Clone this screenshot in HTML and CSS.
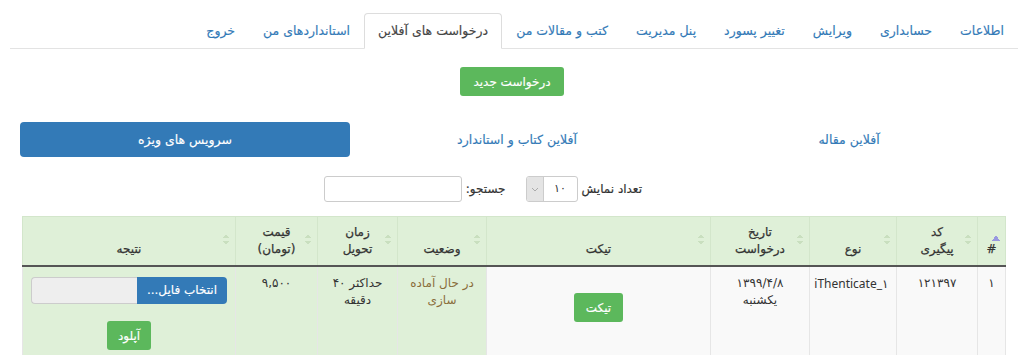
FILE: index.html
```html
<!DOCTYPE html>
<html lang="fa" dir="rtl">
<head>
  <meta charset="UTF-8" />
  <meta name="viewport" content="width=device-width, initial-scale=1.0" />
  <title>درخواست های آفلاین</title>
  <link rel="stylesheet" href="styles.css">
</head>
<body>
  <ul class="tabs">
    <li><a href="#">اطلاعات</a></li>
    <li><a href="#">حسابداری</a></li>
    <li><a href="#">ویرایش</a></li>
    <li><a href="#">تغییر پسورد</a></li>
    <li><a href="#">پنل مدیریت</a></li>
    <li><a href="#">کتب و مقالات من</a></li>
    <li class="active"><a href="#">درخواست های آفلاین</a></li>
    <li><a href="#">استانداردهای من</a></li>
    <li><a href="#">خروج</a></li>
  </ul>

  <div class="new-request">
    <button class="btn btn-green">درخواست جدید</button>
  </div>

  <ul class="pills">
    <li><a href="#">آفلاین مقاله</a></li>
    <li><a href="#">آفلاین کتاب و استاندارد</a></li>
    <li class="active"><a href="#">سرویس های ویژه</a></li>
  </ul>

  <div class="controls">
    <label class="length">تعداد نمایش
      <span class="select">
        <span class="select-value">۱۰</span>
        <span class="select-arrow">
          <svg width="8" height="5" viewBox="0 0 8 5"><path d="M1 1l3 3 3-3" fill="none" stroke="#aaa" stroke-width="1"/></svg>
        </span>
      </span>
    </label>
    <label class="search">جستجو:<input type="text"></label>
  </div>

  <table class="grid">
    <colgroup>
      <col style="width:28px">
      <col style="width:81px">
      <col style="width:87px">
      <col style="width:99px">
      <col style="width:224px">
      <col style="width:89px">
      <col style="width:80px">
      <col style="width:82px">
      <col style="width:213px">
    </colgroup>
    <thead>
      <tr>
        <th class="sorted">#</th>
        <th>کد<br>پیگیری</th>
        <th>نوع</th>
        <th>تاریخ<br>درخواست</th>
        <th>تیکت</th>
        <th>وضعیت</th>
        <th>زمان<br>تحویل</th>
        <th>قیمت<br>(تومان)</th>
        <th>نتیجه</th>
      </tr>
    </thead>
    <tbody>
      <tr>
        <td>۱</td>
        <td>۱۲۱۳۹۷</td>
        <td><bdi class="latin">iThenticate_۱</bdi></td>
        <td>۱۳۹۹/۴/۸<br>یکشنبه</td>
        <td><button class="btn btn-green btn-ticket">تیکت</button></td>
        <td class="ok status">در حال آماده<br>سازی</td>
        <td class="ok">حداکثر ۴۰<br>دقیقه</td>
        <td class="ok">۹,۵۰۰</td>
        <td class="ok">
          <div class="file-group">
            <span class="file-btn">انتخاب فایل...</span>
            <span class="file-name"></span>
          </div>
          <button class="btn btn-green btn-upload">آپلود</button>
        </td>
      </tr>
    </tbody>
  </table>
</body>
</html>
```

FILE: styles.css
```css
body {
  margin: 0;
  font-family: "DejaVu Sans", "Noto Sans", sans-serif;
  font-size: 12px;
  color: #333;
  background-color: #ffffff;
}
a {
  text-decoration: none;
  color: #337ab7;
}
.tabs {
  list-style: none;
  display: flex;
  margin: 13px 6px 0 10px;
  padding: 0;
  border-bottom: 1px solid #e3e3e3;
}
.tabs li {
  margin-bottom: -1px;
}
.tabs a {
  display: block;
  padding: 7px 13px;
  line-height: 20px;
  font-size: 12.5px;
  border: 1px solid transparent;
  border-radius: 4px 4px 0 0;
  -webkit-text-stroke: 0.15px;
}
.tabs .active a {
  color: #444;
  background-color: #fff;
  border-color: #ddd #ddd transparent;
}
.new-request {
  display: flex;
  justify-content: center;
  margin-top: 18px;
}
.btn {
  font-family: inherit;
  font-size: 12px;
  border: none;
  border-radius: 3px;
  color: white;
  cursor: pointer;
  -webkit-text-stroke: 0.15px;
}
.btn-green {
  background-color: #5cb85c;
  height: 29px;
  padding: 0 13px;
}
.pills {
  list-style: none;
  display: flex;
  gap: 2px;
  margin: 26px 10px 0 20px;
  padding: 0;
}
.pills li {
  flex: 1;
}
.pills a {
  display: block;
  height: 35px;
  line-height: 35px;
  text-align: center;
  font-size: 12.5px;
  border-radius: 4px;
  -webkit-text-stroke: 0.15px;
}
.pills .active a {
  background-color: #337ab7;
  color: white;
}
.controls {
  display: flex;
  align-items: center;
  gap: 20px;
  margin-top: 19px;
  padding-right: 382px;
  font-size: 12px;
  -webkit-text-stroke: 0.2px;
}
.controls label {
  display: flex;
  align-items: center;
  gap: 4px;
}
.select {
  display: flex;
  width: 52px;
  height: 26px;
  border: 1px solid #ccc;
  border-radius: 3px;
  box-sizing: border-box;
  overflow: hidden;
  -webkit-text-stroke: 0;
}
.select-value {
  flex: 1;
  text-align: center;
  line-height: 24px;
  font-size: 11px;
}
.select-arrow {
  width: 16px;
  display: flex;
  align-items: center;
  justify-content: center;
  background-color: #e4e4e4;
  border-right: 1px solid #ccc;
}
.search input {
  width: 138px;
  height: 26px;
  box-sizing: border-box;
  border: 1px solid #ccc;
  border-radius: 3px;
  margin: 0;
}
.grid {
  table-layout: fixed;
  width: 983px;
  margin: 14px 18px 0 0;
  border-collapse: collapse;
}
.grid th,
.grid td {
  padding: 7px 8px;
  line-height: 17px;
  text-align: center;
  border: 1px solid #e6e6e6;
}
.grid th {
  position: relative;
  background-color: #dff0d8;
  vertical-align: bottom;
  font-size: 12px;
  font-weight: normal;
  -webkit-text-stroke: 0.25px;
  border-color: #d3e6cb;
  border-bottom: 2px solid #555;
}
.grid th::after {
  content: "";
  position: absolute;
  right: 6px;
  top: 17px;
  width: 6px;
  height: 11px;
  background:
    linear-gradient(to bottom right, transparent 50%, #c9dfbf 50%) 0 0 / 3px 4px no-repeat,
    linear-gradient(to bottom left, transparent 50%, #c9dfbf 50%) 3px 0 / 3px 4px no-repeat,
    linear-gradient(to top right, transparent 50%, #c9dfbf 50%) 0 7px / 3px 4px no-repeat,
    linear-gradient(to top left, transparent 50%, #c9dfbf 50%) 3px 7px / 3px 4px no-repeat;
}
.grid th.sorted::after {
  width: 8px;
  height: 6px;
  top: 18px;
  right: 5px;
  background:
    linear-gradient(to bottom right, transparent 50%, #9898e0 50%) 0 0 / 4px 6px no-repeat,
    linear-gradient(to bottom left, transparent 50%, #9898e0 50%) 4px 0 / 4px 6px no-repeat;
}
.grid td {
  padding-top: 8px;
  height: 76px;
  vertical-align: top;
  background-color: #f9f9f9;
  font-size: 12px;
}
.grid td.ok {
  background-color: #dff0d8;
}
.grid td.status {
  color: #8a6d3b;
}
.latin {
  font-family: "Noto Sans", sans-serif;
  font-size: 12px;
}
.btn-ticket {
  margin-top: 18px;
  padding: 0 12px;
}
.file-group {
  display: flex;
  height: 27px;
  margin-top: 2px;
}
.file-btn {
  background-color: #337ab7;
  color: white;
  line-height: 27px;
  padding: 0 10px;
  border-radius: 0 4px 4px 0;
  -webkit-text-stroke: 0.15px;
}
.file-name {
  flex: 1;
  background-color: #eeeeee;
  border: 1px solid #ccc;
  border-right: none;
  border-radius: 4px 0 0 4px;
}
.btn-upload {
  margin-top: 17px;
  padding: 0 11px;
}
```
